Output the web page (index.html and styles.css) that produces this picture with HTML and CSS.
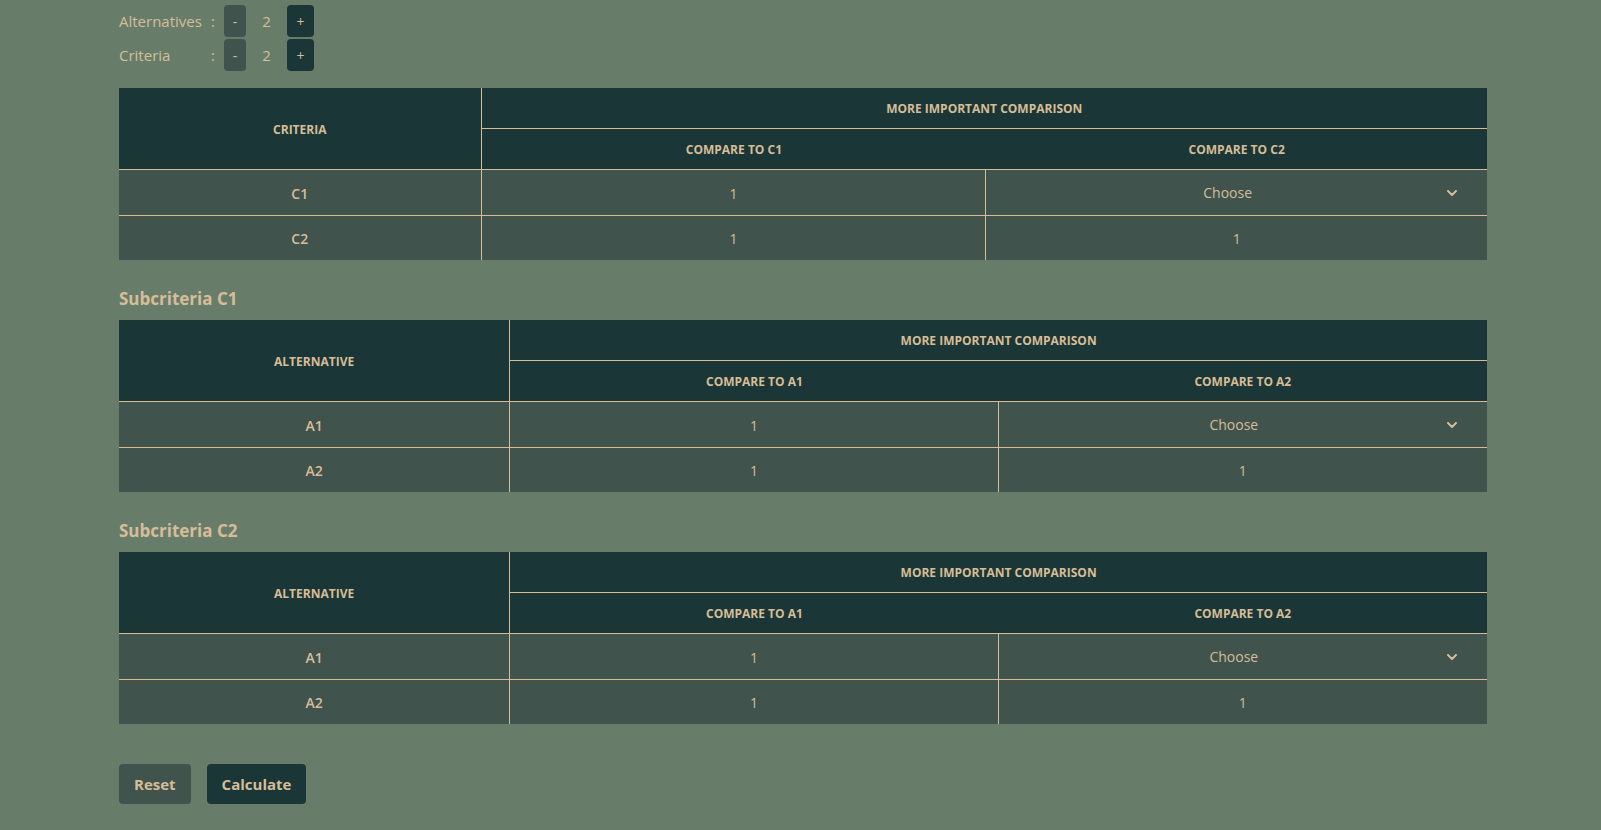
FILE: index.html
```html
<!DOCTYPE html>
<html lang="en">
<head>
<meta charset="utf-8">
<meta name="viewport" content="width=device-width, initial-scale=1">
<title>AHP Calculator</title>
<link rel="stylesheet" href="styles.css">
</head>
<body>
<main class="page">
  <div class="counters">
    <div class="counter">
      <span>Alternatives</span><span>:</span>
      <button type="button" class="step step-minus" aria-label="Fewer alternatives">-</button>
      <span class="count">2</span>
      <button type="button" class="step step-plus" aria-label="More alternatives">+</button>
    </div>
    <div class="counter">
      <span>Criteria</span><span>:</span>
      <button type="button" class="step step-minus" aria-label="Fewer criteria">-</button>
      <span class="count">2</span>
      <button type="button" class="step step-plus" aria-label="More criteria">+</button>
    </div>
  </div>

  <table class="matrix matrix-criteria">
    <colgroup><col class="col-name"><col class="col-first"><col></colgroup>
    <thead>
      <tr><th rowspan="2" class="divide">Criteria</th><th colspan="2">More important comparison</th></tr>
      <tr><th>Compare to C1</th><th>Compare to C2</th></tr>
    </thead>
    <tbody>
      <tr><th class="divide">C1</th><td class="divide">1</td><td class="choice"><select aria-label="C1 compared to C2"><option>Choose</option></select></td></tr>
      <tr><th class="divide">C2</th><td class="divide">1</td><td>1</td></tr>
    </tbody>
  </table>

  <h2 class="title">Subcriteria C1</h2>
  <table class="matrix matrix-sub">
    <colgroup><col class="col-name"><col class="col-first"><col></colgroup>
    <thead>
      <tr><th rowspan="2" class="divide">Alternative</th><th colspan="2">More important comparison</th></tr>
      <tr><th>Compare to A1</th><th>Compare to A2</th></tr>
    </thead>
    <tbody>
      <tr><th class="divide">A1</th><td class="divide">1</td><td class="choice"><select aria-label="C1: A1 compared to A2"><option>Choose</option></select></td></tr>
      <tr><th class="divide">A2</th><td class="divide">1</td><td>1</td></tr>
    </tbody>
  </table>

  <h2 class="title">Subcriteria C2</h2>
  <table class="matrix matrix-sub">
    <colgroup><col class="col-name"><col class="col-first"><col></colgroup>
    <thead>
      <tr><th rowspan="2" class="divide">Alternative</th><th colspan="2">More important comparison</th></tr>
      <tr><th>Compare to A1</th><th>Compare to A2</th></tr>
    </thead>
    <tbody>
      <tr><th class="divide">A1</th><td class="divide">1</td><td class="choice"><select aria-label="C2: A1 compared to A2"><option>Choose</option></select></td></tr>
      <tr><th class="divide">A2</th><td class="divide">1</td><td>1</td></tr>
    </tbody>
  </table>

  <div class="actions">
    <button type="button" class="action reset">Reset</button>
    <button type="button" class="action calculate">Calculate</button>
  </div>
</main>
</body>
</html>
```

FILE: styles.css
```css
:root {
  --sage: #677d6a;
  --moss: #40534c;
  --pine: #1a3636;
  --sand: #d6bd98;
}

* { box-sizing: border-box; }

body {
  margin: 0;
  background: var(--sage);
  color: var(--sand);
  font: 15px/24px "Segoe UI", "Open Sans", "Noto Sans", sans-serif;
}

button, select { font: inherit; color: inherit; border: 0; }
button { cursor: pointer; }

.page { padding: 5px 114px 24px 119px; }

.counters {
  display: grid;
  gap: 2px;
  margin-bottom: 17px;
}

.counter {
  display: grid;
  grid-template-columns: 92px 13px 22px 41px 27px;
  align-items: center;
}

.count { text-align: center; }

.step {
  height: 32px;
  padding: 2px 0 0;
  border-radius: 4px;
  font-size: 14px;
  line-height: 20px;
}

.step-minus, .reset { background: var(--moss); }
.step-plus, .calculate { background: var(--pine); }

.matrix {
  width: 100%;
  table-layout: fixed;
  border-collapse: separate;
  border-spacing: 0;
  text-align: center;
  font-size: 14px;
  line-height: 20px;
}

.matrix-criteria .col-name { width: 26.5%; }
.matrix-criteria .col-first { width: 36.9%; }
.matrix-sub .col-name { width: 28.6%; }
.matrix-sub .col-first { width: 35.7%; }

.matrix th, .matrix td {
  padding: 13px 24px 11px;
  border-bottom: 1px solid var(--sand);
  font-weight: 400;
}

.matrix .divide { border-right: 1px solid var(--sand); }

.matrix thead th {
  background: var(--pine);
  font-size: 12px;
  line-height: 16px;
  font-weight: 700;
  text-transform: uppercase;
}

.matrix tbody { background: var(--moss); }
.matrix tbody th { font-weight: 600; }
.matrix tbody tr:last-child > * { border-bottom: 0; }

.matrix .choice { padding: 0 18px; }

.choice select {
  display: block;
  width: 100%;
  height: 45px;
  padding: 1px 30px 0 12px;
  appearance: none;
  background: transparent url("data:image/svg+xml,%3Csvg xmlns='http://www.w3.org/2000/svg' viewBox='0 0 10 6' fill='none' stroke='%23d6bd98' stroke-width='2' stroke-linecap='round' stroke-linejoin='round'%3E%3Cpath d='M1 1l4 4 4-4'/%3E%3C/svg%3E") no-repeat right 12px center / 10px 6px;
  text-align: center;
  text-align-last: center;
}

.title {
  margin: 25px 0 7px;
  font-size: 17px;
  line-height: 28px;
  font-weight: 700;
}

.actions {
  display: flex;
  gap: 16px;
  margin-top: 40px;
}

.action {
  padding: 8px 15px;
  border-radius: 4px;
  font-weight: 700;
}
```
